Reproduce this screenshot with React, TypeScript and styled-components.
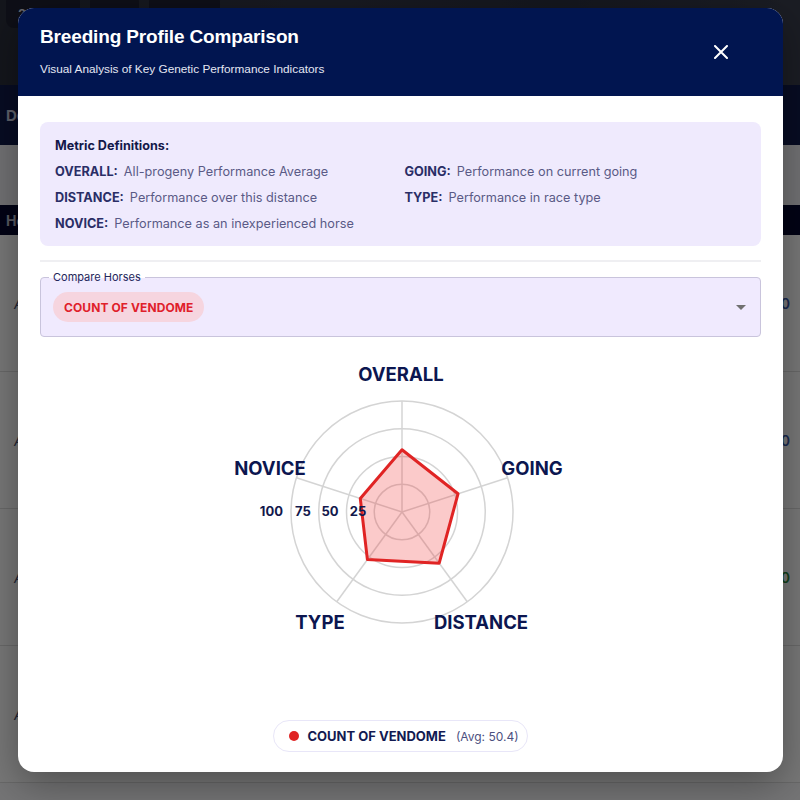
import React from "react";
import styled, { createGlobalStyle } from "styled-components";

const GlobalStyle = createGlobalStyle`
  * { box-sizing: border-box; }
  body {
    margin: 0;
    font-family: Inter, "Liberation Sans", Arial, sans-serif;
    background: #ececf0;
  }
`;

const Page = styled.div`
  width: 800px;
  height: 800px;
  overflow: hidden;
  position: relative;
  background: #f4f4f6;
`;

const Hero = styled.div`
  height: 85px;
  background: linear-gradient(90deg, #2a2e3c 0%, #343846 40%, #2c3040 70%, #3a3e4c 100%);
  display: flex;
  gap: 10px;
  padding: 0 6px;
  align-items: flex-start;
`;

const Chip = styled.div`
  margin-top: -6px;
  padding: 12px 12px 6px;
  border-radius: 8px;
  background: #1e2130;
  color: #d8dbe6;
  font-size: 13px;
  font-weight: 600;
`;

const NavBand = styled.div`
  height: 60px;
  background: #101a4a;
  color: #c8cce0;
  font-weight: 700;
  font-size: 15px;
  display: flex;
  align-items: center;
  padding-left: 6px;
`;

const Gap = styled.div`
  height: 60px;
  background: #eeeef2;
`;

const TableHead = styled.div`
  height: 30px;
  background: #05082c;
  color: #b8bccc;
  font-weight: 700;
  font-size: 14px;
  display: flex;
  align-items: center;
  padding-left: 6px;
`;

const TableRow = styled.div`
  height: 137px;
  background: #fafafa;
  border-bottom: 1px solid #dcdcdc;
  display: flex;
  align-items: center;
  justify-content: space-between;
  padding: 0 10px 0 14px;
  font-size: 14px;
  font-style: italic;
  color: #4a5070;
`;

const RowTail = styled.span<{ $tone: string }>`
  color: ${({ $tone }) => $tone};
  font-style: normal;
  font-weight: 600;
`;

const Overlay = styled.div`
  position: absolute;
  inset: 0;
  background: rgba(0, 0, 0, 0.52);
`;

const Modal = styled.div`
  position: absolute;
  top: 8px;
  left: 18px;
  width: 765px;
  height: 764px;
  background: #ffffff;
  border-radius: 16px;
  overflow: hidden;
  display: flex;
  flex-direction: column;
  box-shadow: 0 12px 40px rgba(0, 0, 0, 0.35);
`;

const Header = styled.div`
  height: 88px;
  background: #011550;
  color: #ffffff;
  display: flex;
  align-items: center;
  justify-content: space-between;
  padding: 0 52px 0 22px;
`;

const TitleBlock = styled.div`
  display: flex;
  flex-direction: column;
  gap: 14px;
  margin-top: -2px;
`;

const Title = styled.h1`
  margin: 0;
  font-family: "Liberation Sans", Arial, sans-serif;
  font-size: 19px;
  line-height: 22px;
  font-weight: 700;
  letter-spacing: -0.15px;
`;

const Subtitle = styled.div`
  font-family: "Liberation Sans", Arial, sans-serif;
  font-size: 11.8px;
  line-height: 14px;
  color: #e4e7f2;
`;

const CloseButton = styled.button`
  border: none;
  background: transparent;
  padding: 0;
  width: 20px;
  height: 20px;
  display: flex;
  align-items: center;
  justify-content: center;
  cursor: pointer;
`;

const Body = styled.div`
  flex: 1;
  display: flex;
  flex-direction: column;
  padding: 26px 22px 20px;
`;

const Definitions = styled.div`
  background: #efeafd;
  border-radius: 8px;
  padding: 16px 15px 14px;
`;

const DefTitle = styled.div`
  font-size: 12.6px;
  line-height: 16px;
  font-weight: 700;
  color: #14184a;
  margin-bottom: 10px;
`;

const DefGrid = styled.div`
  display: grid;
  grid-template-columns: 1fr 1fr;
  column-gap: 8px;
  row-gap: 10px;
`;

const DefItem = styled.div`
  font-size: 12.7px;
  line-height: 16px;
  color: #5a5a86;
  white-space: nowrap;
  b {
    font-weight: 700;
    color: #2a2e66;
    margin-right: 6px;
  }
`;

const Divider = styled.div`
  height: 2px;
  background: #efeff2;
  margin: 14px 0 15px;
`;

const Field = styled.div`
  height: 60px;
  padding: 0 14px 0 12px;
  border: 1px solid #c9c4dc;
  border-radius: 4px;
  background: #f0eafe;
  display: flex;
  align-items: center;
  justify-content: space-between;
  position: relative;
`;

const FieldLabel = styled.span`
  font-size: 11px;
  line-height: 12px;
  color: #23265a;
  padding: 0 4px;
  position: absolute;
  top: -7px;
  left: 8px;
  background: linear-gradient(#ffffff 55%, #f0eafe 55%);
`;

const HorseChip = styled.span`
  display: inline-flex;
  align-items: center;
  height: 30px;
  padding: 0 11px;
  border-radius: 15px;
  background: #f6d5df;
  color: #e0202a;
  font-size: 12px;
  font-weight: 700;
  letter-spacing: 0.1px;
`;

const Caret = styled.span`
  width: 0;
  height: 0;
  border-left: 5px solid transparent;
  border-right: 5px solid transparent;
  border-top: 5px solid #707070;
`;

const ChartWrap = styled.div`
  display: flex;
  justify-content: center;
  margin-top: 13px;
`;

const LegendRow = styled.div`
  margin-top: auto;
  display: flex;
  justify-content: center;
`;

const LegendPill = styled.div`
  height: 32px;
  display: inline-flex;
  align-items: center;
  gap: 8px;
  padding: 0 8px 0 15px;
  border: 1px solid #e8e6f8;
  border-radius: 16px;
  background: #fff;
  font-size: 13px;
  font-weight: 700;
  color: #121a52;
`;

const Dot = styled.span`
  width: 10px;
  height: 10px;
  border-radius: 50%;
  background: #e02424;
`;

const Avg = styled.span`
  font-size: 12px;
  font-weight: 400;
  color: #4c5080;
  margin-left: 2px;
`;

const axes = [
  { key: "OVERALL", value: 56, lx: 361, ly: 26 },
  { key: "GOING", value: 53, lx: 492, ly: 120 },
  { key: "DISTANCE", value: 57, lx: 441, ly: 274 },
  { key: "TYPE", value: 53, lx: 280, ly: 274 },
  { key: "NOVICE", value: 39.5, lx: 230, ly: 120 },
];

const CX = 362;
const CY = 162;
const R = 111;

const point = (i: number, r: number) => {
  const a = ((90 - i * 72) * Math.PI) / 180;
  return [CX + r * Math.cos(a), CY - r * Math.sin(a)];
};

const RadarChart = () => {
  const poly = axes
    .map((a, i) => point(i, (a.value / 100) * R).map((n) => n.toFixed(1)).join(","))
    .join(" ");
  return (
    <svg width="721" height="330" viewBox="0 0 721 330">
      {[0.25, 0.5, 0.75, 1].map((f) => (
        <circle key={f} cx={CX} cy={CY} r={R * f} fill="none" stroke="#d4d4d4" strokeWidth="1.5" />
      ))}
      {axes.map((a, i) => {
        const [x, y] = point(i, R);
        return <line key={a.key} x1={CX} y1={CY} x2={x} y2={y} stroke="#d4d4d4" strokeWidth="1.5" />;
      })}
      <polygon points={poly} fill="rgba(240, 60, 60, 0.27)" stroke="#e02424" strokeWidth="3" strokeLinejoin="round" />
      {[25, 50, 75, 100].map((t) => (
        <text
          key={t}
          x={CX - (t / 100) * R - 8}
          y={CY}
          textAnchor="end"
          dominantBaseline="middle"
          fontSize="13"
          fontWeight="700"
          fill="#12184c"
          fontFamily="Inter, sans-serif"
        >
          {t}
        </text>
      ))}
      {axes.map((a) => (
        <text
          key={a.key}
          x={a.lx}
          y={a.ly}
          textAnchor="middle"
          dominantBaseline="middle"
          fontSize="18.5"
          fontWeight="700"
          fill="#0c1650"
          fontFamily="Inter, sans-serif"
        >
          {a.key}
        </text>
      ))}
    </svg>
  );
};

export default function App() {
  return (
    <>
      <GlobalStyle />
      <Page>
        <Hero>
          <Chip>2m100y</Chip>
          <Chip>Soft</Chip>
          <Chip>Class 4</Chip>
        </Hero>
        <NavBand>Details</NavBand>
        <Gap />
        <TableHead>Horse</TableHead>
        <TableRow>
          A<RowTail $tone="#3a5aa8">0</RowTail>
        </TableRow>
        <TableRow>
          A<RowTail $tone="#3a5aa8">0</RowTail>
        </TableRow>
        <TableRow>
          A<RowTail $tone="#2a8a3a">0</RowTail>
        </TableRow>
        <TableRow>
          A<RowTail $tone="#3a5aa8"> </RowTail>
        </TableRow>
        <Overlay />
        <Modal>
          <Header>
            <TitleBlock>
              <Title>Breeding Profile Comparison</Title>
              <Subtitle>Visual Analysis of Key Genetic Performance Indicators</Subtitle>
            </TitleBlock>
            <CloseButton aria-label="Close">
              <svg width="14" height="14" viewBox="0 0 14 14">
                <path d="M1 1 L13 13 M13 1 L1 13" stroke="#ffffff" strokeWidth="2" strokeLinecap="round" />
              </svg>
            </CloseButton>
          </Header>
          <Body>
            <Definitions>
              <DefTitle>Metric Definitions:</DefTitle>
              <DefGrid>
                <DefItem><b>OVERALL:</b>All-progeny Performance Average</DefItem>
                <DefItem><b>GOING:</b>Performance on current going</DefItem>
                <DefItem><b>DISTANCE:</b>Performance over this distance</DefItem>
                <DefItem><b>TYPE:</b>Performance in race type</DefItem>
                <DefItem><b>NOVICE:</b>Performance as an inexperienced horse</DefItem>
              </DefGrid>
            </Definitions>
            <Divider />
            <Field>
              <FieldLabel>Compare Horses</FieldLabel>
              <HorseChip>COUNT OF VENDOME</HorseChip>
              <Caret />
            </Field>
            <ChartWrap>
              <RadarChart />
            </ChartWrap>
            <LegendRow>
              <LegendPill>
                <Dot />
                COUNT OF VENDOME
                <Avg>(Avg: 50.4)</Avg>
              </LegendPill>
            </LegendRow>
          </Body>
        </Modal>
      </Page>
    </>
  );
}
